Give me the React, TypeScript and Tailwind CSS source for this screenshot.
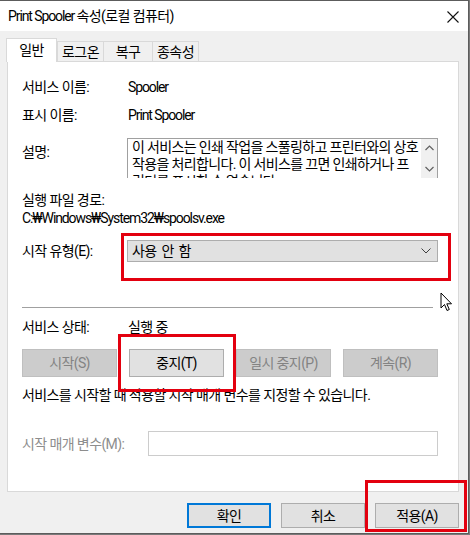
import React from "react";

function Btn({
  label,
  w,
  disabled,
  primary,
  h = "h-[28px]",
}: {
  label: string;
  w: string;
  disabled?: boolean;
  primary?: boolean;
  h?: string;
}) {
  const base = "flex items-center justify-center border " + w + " " + h;
  if (disabled) return <div className={base + " bg-[#cccccc] border-[#bfbfbf] text-[#838383]"}>{label}</div>;
  if (primary)
    return <div className={base + " bg-[#e1e1e1] border-2 border-[#0078d7] text-black"}>{label}</div>;
  return <div className={base + " bg-[#e1e1e1] border-[#adadad] text-black"}>{label}</div>;
}

function Tab({ label, w, active }: { label: string; w: string; active?: boolean }) {
  if (active)
    return (
      <div
        className={
          "relative z-10 -ml-px -mb-px flex h-[24px] items-start justify-center border border-b-0 border-[#d9d9d9] bg-white pt-[2px] " +
          w
        }
      >
        {label}
      </div>
    );
  return (
    <div
      className={
        "-ml-px flex h-[20px] items-center justify-center border border-b-0 border-[#d9d9d9] bg-[#f0f0f0] " + w
      }
    >
      {label}
    </div>
  );
}

export default function App() {
  return (
    <div className="relative h-[535px] w-[470px] overflow-hidden bg-[#7a7a7a] font-['Roboto','Noto_Sans_CJK_KR',sans-serif] text-[14px] leading-[18px] tracking-[-0.6px] text-black">
      <div className="flex h-[534px] w-[469px] flex-col border-r border-t border-b border-[#5c5c5c] bg-[#f0f0f0]">
        {/* title bar */}
        <div className="flex h-[30px] shrink-0 items-center justify-between bg-white pl-[8px] pr-[9px]">
          <span>
            <span className="tracking-[-1.1px]">Print Spooler </span>속성(로컬 컴퓨터)
          </span>
          <svg width="12" height="12" viewBox="0 0 12 12" className="mt-[1px]">
            <path d="M0.5 0.5 L11.5 11.5 M11.5 0.5 L0.5 11.5" stroke="#111" strokeWidth="1.1" fill="none" />
          </svg>
        </div>

        <div className="flex flex-1 flex-col pl-[7px] pr-[9px] pt-[7px]">
          {/* tabs */}
          <div className="flex h-[23px] items-end">
            <Tab label="일반" w="w-[51px]" active />
            <div className="ml-px flex">
              <Tab label="로그온" w="w-[47px]" />
              <Tab label="복구" w="w-[50px]" />
              <Tab label="종속성" w="w-[47px]" />
            </div>
          </div>

          {/* panel */}
          <div className="flex h-[431px] w-[452px] flex-col border border-[#d9d9d9] bg-white pl-[14px] pr-[20px]">
            <div className="mt-[16px] flex h-[18px] items-center">
              <span className="w-[106px]">서비스 이름:</span>
              <span className="tracking-[-1.1px]">Spooler</span>
            </div>
            <div className="mt-[10px] flex h-[18px] items-center">
              <span className="w-[106px]">표시 이름:</span>
              <span className="tracking-[-1.1px]">Print Spooler</span>
            </div>
            <div className="mt-[14px] flex h-[40px]">
              <span className="w-[105px] pt-[5px]">설명:</span>
              <div className="flex flex-1 overflow-hidden border border-b-0 border-[#a0a0a0]">
                <div className="h-[40px] flex-1 overflow-hidden whitespace-nowrap pl-[4px] leading-[17px] tracking-[-0.65px]">
                  이 서비스는 인쇄 작업을 스풀링하고 프린터와의 상호
                  <br />
                  작용을 처리합니다. 이 서비스를 끄면 인쇄하거나 프
                  <br />
                  린터를 표시할 수 없습니다.
                </div>
                <div className="flex w-[16px] flex-col items-center justify-between bg-[#f0f0f0] py-[6px]">
                  <svg width="9" height="6" viewBox="0 0 9 6">
                    <path d="M0.5 5 L4.5 1 L8.5 5" stroke="#606060" strokeWidth="1.2" fill="none" />
                  </svg>
                  <svg width="9" height="6" viewBox="0 0 9 6">
                    <path d="M0.5 1 L4.5 5 L8.5 1" stroke="#606060" strokeWidth="1.2" fill="none" />
                  </svg>
                </div>
              </div>
            </div>
            <div className="mt-[13px] flex h-[18px] items-center">실행 파일 경로:</div>
            <div className="flex h-[18px] items-center tracking-[-1.1px]">C:₩Windows₩System32₩spoolsv.exe</div>
            <div className="mt-[13px] flex h-[22px] items-center">
              <span className="w-[105px]">시작 유형(E):</span>
              <div className="flex h-[22px] flex-1 items-center justify-between border border-[#adadad] bg-[#e1e1e1] pl-[4px] pr-[6px]">
                <span className="[word-spacing:2px]">사용 안 함</span>
                <svg width="10" height="6" viewBox="0 0 10 6">
                  <path d="M0.5 0.5 L5 5 L9.5 0.5" stroke="#404040" strokeWidth="1" fill="none" />
                </svg>
              </div>
            </div>
            <div className="mr-[5px] mt-[45px] h-px bg-[#a0a0a0]" />
            <div className="mt-[10px] flex h-[18px] items-center">
              <span className="w-[106px]">서비스 상태:</span>
              <span>실행 중</span>
            </div>
            <div className="mt-[13px] flex justify-between">
              <Btn label="시작(S)" w="w-[95px]" disabled />
              <Btn label="중지(T)" w="w-[95px]" />
              <Btn label="일시 중지(P)" w="w-[95px]" disabled />
              <Btn label="계속(R)" w="w-[95px]" disabled />
            </div>
            <div className="mt-[9px] flex h-[18px] items-center whitespace-nowrap">
              서비스를 시작할 때 적용할 시작 매개 변수를 지정할 수 있습니다.
            </div>
            <div className="mt-[27px] flex h-[25px] items-center">
              <span className="w-[126px] text-[#8d8d8d]">시작 매개 변수(M):</span>
              <div className="h-[25px] flex-1 border border-[#cccccc] bg-white" />
            </div>
          </div>

          {/* bottom buttons */}
          <div className="mt-[11px] flex gap-[10px] pl-[180px]">
            <Btn label="확인" w="w-[85px]" h="h-[25px]" primary />
            <Btn label="취소" w="w-[85px]" h="h-[25px]" />
            <Btn label="적용(A)" w="w-[85px]" h="h-[25px]" />
          </div>
        </div>
      </div>

      {/* red annotation boxes */}
      <div className="absolute left-[121px] top-[233px] h-[48px] w-[330px] border-[3px] border-[#e3000f]" />
      <div className="absolute left-[118px] top-[334px] h-[58px] w-[118px] border-[3px] border-[#e3000f]" />
      <div className="absolute left-[365px] top-[480px] h-[52px] w-[102px] border-[3px] border-[#e3000f]" />

      {/* mouse cursor */}
      <svg className="absolute left-[440px] top-[292px]" width="14" height="20" viewBox="0 0 14 20">
        <path d="M1 1 L1 16 L4.5 12.5 L7 18.5 L9.3 17.5 L6.8 11.8 L11.5 11.8 Z" fill="#fff" stroke="#000" strokeWidth="1" />
      </svg>
    </div>
  );
}
